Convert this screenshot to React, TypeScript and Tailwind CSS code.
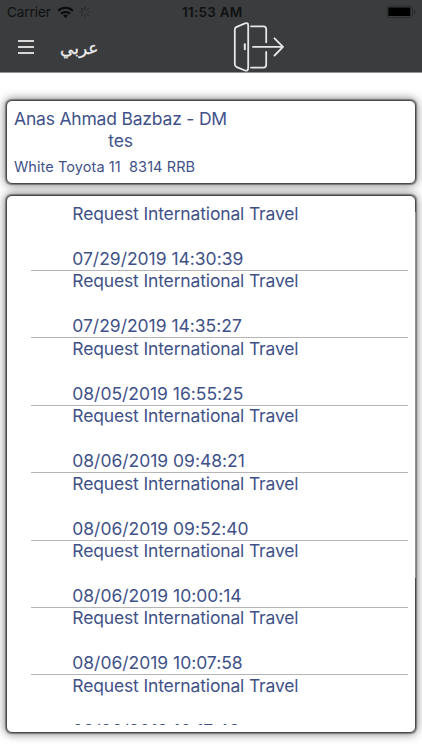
import type { ReactNode } from "react";

const requests = [
  "07/29/2019 14:30:39",
  "07/29/2019 14:35:27",
  "08/05/2019 16:55:25",
  "08/06/2019 09:48:21",
  "08/06/2019 09:52:40",
  "08/06/2019 10:00:14",
  "08/06/2019 10:07:58",
  "08/06/2019 10:17:48",
];

function WifiIcon() {
  return (
    <svg width="17" height="13" viewBox="0 0 17 13" fill="none" stroke="#0b0b0c" strokeWidth="2.1">
      <path d="M1.2 4.8a10.4 10.4 0 0 1 14.6 0" />
      <path d="M4 7.8a6.4 6.4 0 0 1 9 0" />
      <path d="M8.5 12 6.1 9.6a3.5 3.5 0 0 1 4.8 0z" fill="#0b0b0c" stroke="none" />
    </svg>
  );
}

function SpinnerIcon() {
  return (
    <svg width="12" height="12" viewBox="0 0 12 12" stroke="#1f2021" strokeWidth="1.1" strokeLinecap="round">
      <path d="M6 1v2.3M2.5 2.5l1.6 1.6M1 6h2.3" opacity=".85" />
      <path d="M2.5 9.5l1.6-1.6M6 11V8.7M9.5 9.5 7.9 7.9" opacity=".6" />
      <path d="M11 6H8.7M9.5 2.5 7.9 4.1" opacity=".35" />
    </svg>
  );
}

function BatteryIcon() {
  return (
    <svg width="30" height="14" viewBox="0 0 30 14">
      <rect x="1" y="1" width="25.5" height="11.5" rx="2.5" fill="none" stroke="#2b2c2d" />
      <rect x="2.3" y="2.5" width="22" height="8.5" rx="0.5" fill="#000" />
      <path d="M28 5v4c1.4-.6 1.4-3.4 0-4z" fill="#1d1e1f" />
    </svg>
  );
}

function LogoutIcon() {
  return (
    <svg width="52" height="52" viewBox="0 0 52 52" fill="none" stroke="#e6e6e6" strokeWidth="1.8" strokeLinecap="round" strokeLinejoin="round">
      <path d="M4.2 6.1 13 2.4Q16.2 1.3 16.2 4.5V46.5Q16.2 50.5 13 49.5L4.7 46.1Q2.8 45.3 2.8 43V8.8Q2.8 6.8 4.2 6.1z" />
      <path d="M19 5.4H31.5Q34.2 5.4 34.2 8.3V21.3" />
      <path d="M34.2 31V43.5Q34.2 46.6 31.5 46.6H19" />
      <path d="M12.8 23.2v5" strokeWidth="2" />
      <path d="M21 25.9H50.5M42.5 17.3 51 25.9 42.5 34.5" />
    </svg>
  );
}

function Card({ className, children }: { className: string; children: ReactNode }) {
  return (
    <section className={`relative mx-1.5 rounded-md border border-[#4a4a4c] bg-white shadow-[0_0_1px_0.2px_rgba(0,0,0,0.35),0_0_10px_1px_rgba(0,0,0,0.5)] ${className}`}>
      {children}
    </section>
  );
}

export default function App() {
  return (
    <main className="h-[750px] w-full overflow-hidden bg-white font-['Inter',sans-serif] text-[#3f5288]">
      <header className="relative h-[73px] border-b border-[#929294] bg-[#3b3c3e] text-[#0f1011]">
        <div className="flex h-6 items-center pl-[7px] text-[13.5px]">
          <span className="tracking-[-0.05px]">Carrier</span>
          <span className="ml-1.5"><WifiIcon /></span>
          <span className="ml-[5px]"><SpinnerIcon /></span>
        </div>
        <span className="absolute left-[182px] top-0 text-[13.5px] font-semibold leading-6 tracking-[0.25px]">11:53 AM</span>
        <span className="absolute left-[386px] top-[5px]"><BatteryIcon /></span>
        <div className="flex items-center">
          <button aria-label="Menu" className="ml-[18px] mt-4 flex w-4 flex-col gap-[4.5px]">
            <span className="h-[1.5px] bg-[#d8d8d9]" />
            <span className="h-[1.5px] bg-[#d8d8d9]" />
            <span className="h-[1.5px] bg-[#d8d8d9]" />
          </button>
        </div>
        <button lang="ar" dir="rtl" className="absolute left-[60px] top-[34px] font-['DejaVu_Sans',sans-serif] text-[17px] leading-7 text-[#ececec] [-webkit-text-stroke:0.3px_#ececec]">
          عربي
        </button>
        <button aria-label="Log out" className="absolute left-[232px] top-[21px]"><LogoutIcon /></button>
      </header>

      <Card className="mt-[27px] h-[84px] pl-[7px]">
        <h1 className="w-[213px] whitespace-nowrap pt-[7px] text-center text-[17.5px] leading-[22px] tracking-[-0.2px]">
          Anas Ahmad Bazbaz - DM
          <br />
          tes
        </h1>
        <p className="mt-1 whitespace-pre text-[14.5px] leading-[22px] tracking-[0.08px]">White Toyota 11  8314 RRB</p>
      </Card>

      <Card className="mt-[11px] h-[538px] pb-[7px]">
        {/* the scrolled part of the list has a paler right edge */}
        <span className="absolute -right-px top-4 h-[366px] w-px bg-[#919191]" />
        <ul className="mr-[7px] ml-6 h-full overflow-hidden pt-[7px]">
          {requests.map((date) => (
            <li key={date} className="h-[67.4px] pl-[41.3px] text-[17.5px] leading-[22px]">
              <p className="tracking-[-0.15px]">Request International Travel</p>
              <p className="mt-[23px] tracking-[-0.02px]">{date}</p>
              <div className="-ml-[41.3px] h-px bg-[#b5b5b5]" />
            </li>
          ))}
        </ul>
      </Card>
    </main>
  );
}
